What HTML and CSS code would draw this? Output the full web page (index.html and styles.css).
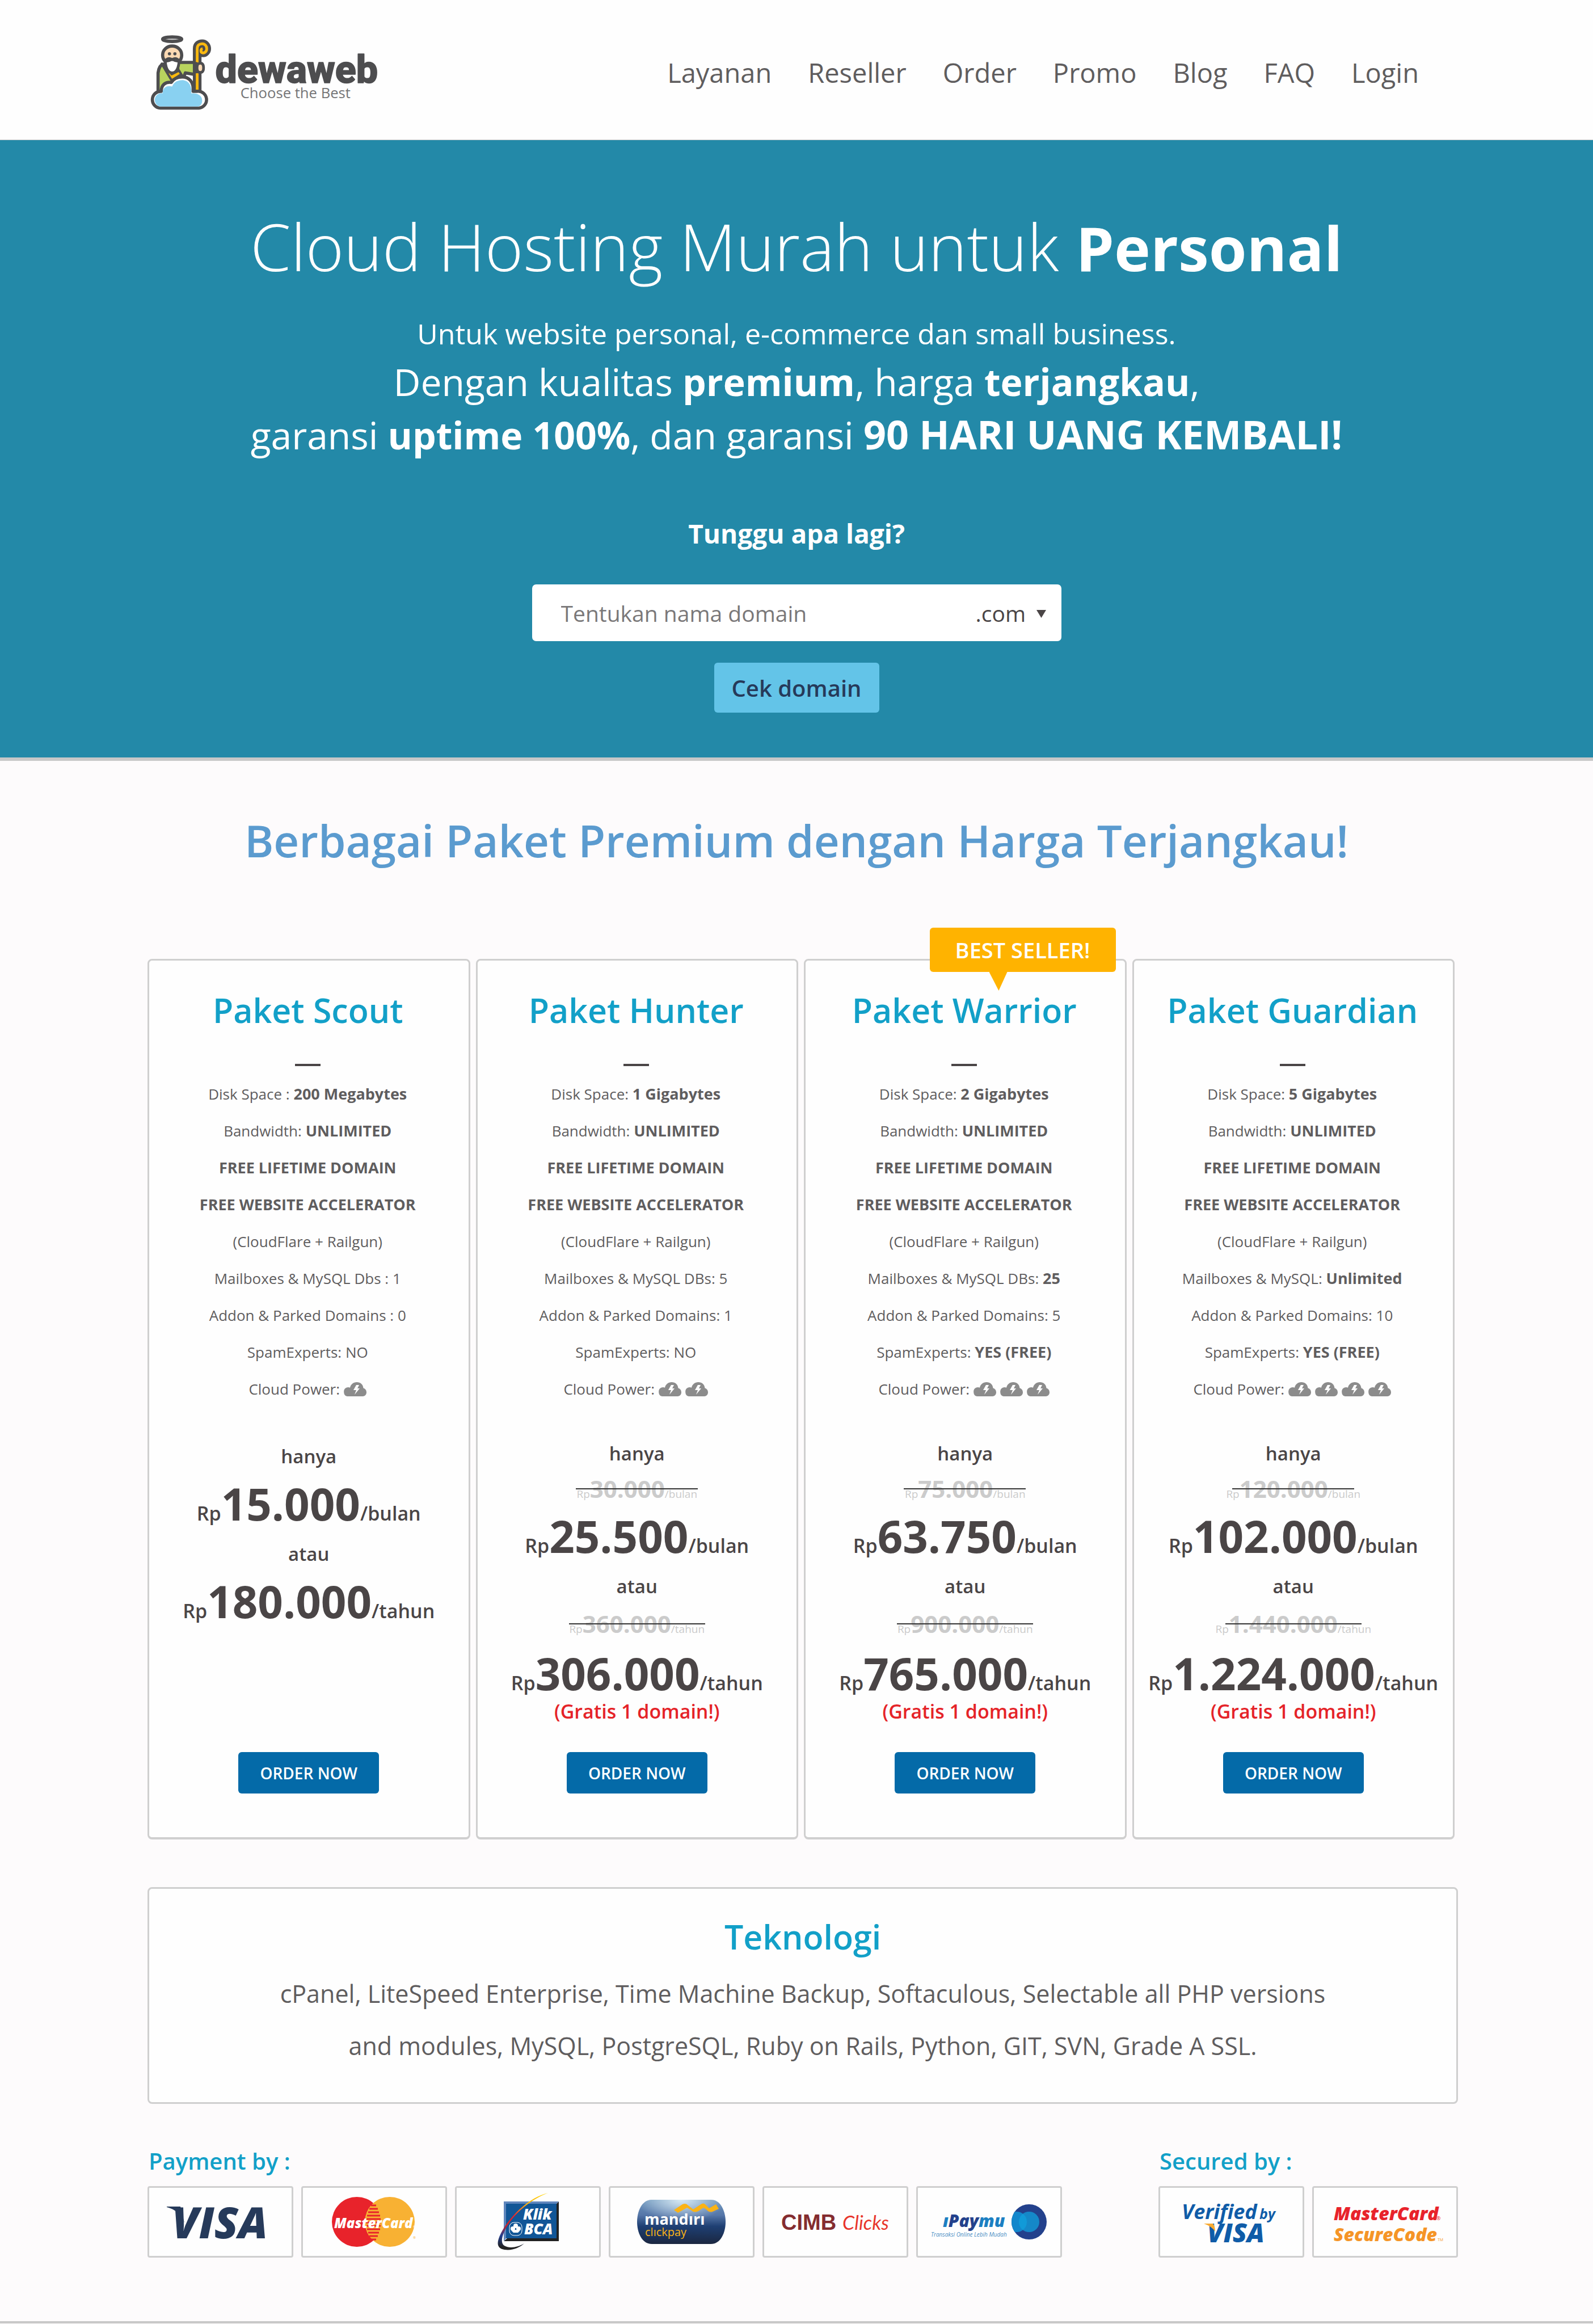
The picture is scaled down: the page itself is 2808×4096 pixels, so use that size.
FILE: index.html
```html
<!DOCTYPE html>
<html lang="id">
<head>
<meta charset="utf-8">
<meta name="viewport" content="width=device-width, initial-scale=1">
<title>Dewaweb - Cloud Hosting Murah</title>
<link rel="stylesheet" href="styles.css">
</head>
<body>
<svg class="sprite" aria-hidden="true">
  <symbol id="cloud" viewBox="0 0 41 25">
    <path fill="#8c8c8c" d="M7 25a7 8 0 0 1-1-15.500c2-.8 4-.7 6 .2C13 4 18 0 24 0s11 4 11.500 10.500C39 11.500 41 14.500 41 18c0 4-3 7-6.500 7z"/>
    <path fill="#fff" d="M23 5h5l-3 6h4l-9 11 3-8h-5z"/>
  </symbol>
</svg>

<header class="header">
  <a class="logo" href="#" aria-label="Dewaweb">
    <svg width="400" height="134" viewBox="331 77 499 167">
      <g transform="translate(300 40)" stroke="#4d4d4f" stroke-width="7" stroke-linejoin="round" stroke-linecap="round">
        <ellipse cx="79" cy="47" rx="21" ry="5" fill="#c9c9c9"/>
        <path fill="#b8d45e" d="M57 102C50 108 47 117 48 130V168L96 150 93 98z" />
        <path fill="#b8d45e" d="M90 98H131V125L108 121 104 132 92 118z"/>
        <path fill="#fff" stroke="none" d="M112 127l14 4v18z"/>
        <path fill="#fbb90f" d="M56 101L78 138 99 124 94 116 78 124 66 106z" stroke-width="5"/>
        <ellipse cx="79" cy="82" rx="21" ry="20" fill="#fbd9b3"/>
        <path fill="#fff" stroke-width="6" d="M64 94C64 108 69 121 79 121S94 108 94 94C88 88 84 88 79 92 74 88 70 88 64 94z"/>
        <path fill="none" stroke-width="5" d="M62 95q10 2 17-4q7 6 17 4"/>
        <g fill="#4d4d4f" stroke="none"><circle cx="73" cy="79" r="3.500"/><circle cx="85" cy="79" r="3.500"/></g>
        <path fill="none" stroke-width="19" d="M134 160V68C134 60 139 57 145 57C151 57 155 62 155 68C155 73 151 77 147 77"/>
        <path fill="none" stroke="#fbb90f" stroke-width="6" stroke-linecap="butt" d="M134 158V68C134 60 139 57 145 57C151 57 155 62 155 68C155 74 150 78 146 77C141 76 141 69 146 68"/>
        <path fill="none" stroke-width="8" d="M132 101V118"/>
        <path fill="#fbd9b3" stroke-width="6" d="M135 102C144 97 148 101 148 110S144 122 136 119C133 114 133 108 135 102z"/>
        <path fill="#fff" d="M53 198.500a18.500 18.500 0 0 1 2-37C55 148 64 140 77 142C82 134 90 130 101 130C116 130 127 141 125 161.500h9a18.500 18.500 0 0 1 4 37z"/>
        <path fill="#89d1f1" stroke="none" d="M53 195a14.500 14.500 0 0 1 5-29C58 154 66 148 79 151C83 141 91 137 101 137C114 137 123 148 121 166C136 165 145 171 145 182C145 190 141 195 134 195z"/>
      </g>
      <text class="logo-name" x="474" y="183" font-size="85">dewaweb</text>
      <text class="logo-tag" x="529" y="217" font-size="32">Choose the Best</text>
    </svg>
  </a>
  <nav class="nav">
    <a href="#">Layanan</a>
    <a href="#">Reseller</a>
    <a href="#">Order</a>
    <a href="#">Promo</a>
    <a href="#">Blog</a>
    <a href="#">FAQ</a>
    <a href="#">Login</a>
  </nav>
</header>

<main>
<section class="hero">
  <h1>Cloud Hosting Murah untuk <strong>Personal</strong></h1>
  <p class="lead">Untuk website personal, e-commerce dan small business.</p>
  <p class="pitch">Dengan kualitas <strong>premium</strong>, harga <strong>terjangkau</strong>,<br>garansi <strong>uptime 100%</strong>, dan garansi <strong class="guarantee">90 HARI UANG KEMBALI!</strong></p>
  <p class="ask">Tunggu apa lagi?</p>
  <form class="search">
    <div class="field">
      <input type="text" placeholder="Tentukan nama domain" aria-label="Nama domain">
      <select aria-label="Ekstensi domain"><option>.com</option></select>
      <svg class="caret" width="17" height="14" viewBox="0 0 17 14" aria-hidden="true"><path fill="#4a4546" d="M0 0h17l-8.500 14z"/></svg>
    </div>
    <button type="button">Cek domain</button>
  </form>
</section>

<h2 class="heading">Berbagai Paket Premium dengan Harga Terjangkau!</h2>

<div class="content">
  <div class="plans">
    <article class="plan plan-basic">
      <h3>Paket Scout</h3>
      <ul>
        <li>Disk Space : <b>200 Megabytes</b></li>
        <li>Bandwidth: <b>UNLIMITED</b></li>
        <li><b>FREE LIFETIME DOMAIN</b></li>
        <li><b>FREE WEBSITE ACCELERATOR</b></li>
        <li>(CloudFlare + Railgun)</li>
        <li>Mailboxes &amp; MySQL Dbs : 1</li>
        <li>Addon &amp; Parked Domains : 0</li>
        <li>SpamExperts: NO</li>
        <li class="power">Cloud Power: <svg><use href="#cloud"/></svg></li>
      </ul>
      <div class="prices">
        <p class="word">hanya</p>
        <p class="price month"><span>Rp</span>15.000<span>/bulan</span></p>
        <p class="word">atau</p>
        <p class="price year"><span>Rp</span>180.000<span>/tahun</span></p>
      </div>
      <button type="button">ORDER NOW</button>
    </article>

    <article class="plan">
      <h3>Paket Hunter</h3>
      <ul>
        <li>Disk Space: <b>1 Gigabytes</b></li>
        <li>Bandwidth: <b>UNLIMITED</b></li>
        <li><b>FREE LIFETIME DOMAIN</b></li>
        <li><b>FREE WEBSITE ACCELERATOR</b></li>
        <li>(CloudFlare + Railgun)</li>
        <li>Mailboxes &amp; MySQL DBs: 5</li>
        <li>Addon &amp; Parked Domains: 1</li>
        <li>SpamExperts: NO</li>
        <li class="power">Cloud Power: <svg><use href="#cloud"/></svg><svg><use href="#cloud"/></svg></li>
      </ul>
      <div class="prices">
        <p class="word">hanya</p>
        <del class="month"><span>Rp</span>30.000<span>/bulan</span></del>
        <p class="price month"><span>Rp</span>25.500<span>/bulan</span></p>
        <p class="word">atau</p>
        <del class="year"><span>Rp</span>360.000<span>/tahun</span></del>
        <p class="price year"><span>Rp</span>306.000<span>/tahun</span></p>
        <p class="bonus">(Gratis 1 domain!)</p>
      </div>
      <button type="button">ORDER NOW</button>
    </article>

    <article class="plan">
      <div class="badge">BEST SELLER!</div>
      <h3>Paket Warrior</h3>
      <ul>
        <li>Disk Space: <b>2 Gigabytes</b></li>
        <li>Bandwidth: <b>UNLIMITED</b></li>
        <li><b>FREE LIFETIME DOMAIN</b></li>
        <li><b>FREE WEBSITE ACCELERATOR</b></li>
        <li>(CloudFlare + Railgun)</li>
        <li>Mailboxes &amp; MySQL DBs: <b>25</b></li>
        <li>Addon &amp; Parked Domains: 5</li>
        <li>SpamExperts: <b>YES (FREE)</b></li>
        <li class="power">Cloud Power: <svg><use href="#cloud"/></svg><svg><use href="#cloud"/></svg><svg><use href="#cloud"/></svg></li>
      </ul>
      <div class="prices">
        <p class="word">hanya</p>
        <del class="month"><span>Rp</span>75.000<span>/bulan</span></del>
        <p class="price month"><span>Rp</span>63.750<span>/bulan</span></p>
        <p class="word">atau</p>
        <del class="year"><span>Rp</span>900.000<span>/tahun</span></del>
        <p class="price year"><span>Rp</span>765.000<span>/tahun</span></p>
        <p class="bonus">(Gratis 1 domain!)</p>
      </div>
      <button type="button">ORDER NOW</button>
    </article>

    <article class="plan">
      <h3>Paket Guardian</h3>
      <ul>
        <li>Disk Space: <b>5 Gigabytes</b></li>
        <li>Bandwidth: <b>UNLIMITED</b></li>
        <li><b>FREE LIFETIME DOMAIN</b></li>
        <li><b>FREE WEBSITE ACCELERATOR</b></li>
        <li>(CloudFlare + Railgun)</li>
        <li>Mailboxes &amp; MySQL: <b>Unlimited</b></li>
        <li>Addon &amp; Parked Domains: 10</li>
        <li>SpamExperts: <b>YES (FREE)</b></li>
        <li class="power">Cloud Power: <svg><use href="#cloud"/></svg><svg><use href="#cloud"/></svg><svg><use href="#cloud"/></svg><svg><use href="#cloud"/></svg></li>
      </ul>
      <div class="prices">
        <p class="word">hanya</p>
        <del class="month"><span>Rp</span>120.000<span>/bulan</span></del>
        <p class="price month"><span>Rp</span>102.000<span>/bulan</span></p>
        <p class="word">atau</p>
        <del class="year"><span>Rp</span>1.440.000<span>/tahun</span></del>
        <p class="price year"><span>Rp</span>1.224.000<span>/tahun</span></p>
        <p class="bonus">(Gratis 1 domain!)</p>
      </div>
      <button type="button">ORDER NOW</button>
    </article>
  </div>

  <section class="tech">
    <h2>Teknologi</h2>
    <p>cPanel, LiteSpeed Enterprise, Time Machine Backup, Softaculous, Selectable all PHP versions<br>and modules, MySQL, PostgreSQL, Ruby on Rails, Python, GIT, SVN, Grade A SSL.</p>
  </section>

  <footer class="partners">
    <section>
      <h4>Payment by :</h4>
      <div class="cards">
        <div class="card"><svg viewBox="0 0 251 120" role="img" aria-label="VISA">
          <path fill="#263a5a" d="M31 33H55L62 62C56 46 46 38 31 34z"/>
          <text class="heavy" x="40" y="89" font-size="77" fill="#263a5a">VISA</text>
        </svg></div>
        <div class="card"><svg viewBox="0 0 251 120" role="img" aria-label="MasterCard">
          <circle cx="95" cy="60" r="44" fill="#e8232b"/>
          <circle cx="153" cy="60" r="44" fill="#f8b133"/>
          <g stroke="#e8232b" stroke-width="3"><path d="M120 31h9M117 37h15M115 43h19M113 49h23M112 55h25M111 61h26M112 67h25M113 73h23M115 79h19M117 85h15M120 91h9"/></g>
          <text class="heavy" x="55" y="71" font-size="24" fill="#fff">MasterCard</text>
          <text class="plain" x="194" y="71" font-size="6" fill="#fff">®</text>
          <text class="plain" x="194" y="90" font-size="6" fill="#f8b133">®</text>
        </svg></div>
        <div class="card"><svg viewBox="0 0 251 120" role="img" aria-label="Klik BCA">
          <defs><linearGradient id="swoosh" x1="0" y1="0" x2="0" y2="1">
            <stop offset="0" stop-color="#ffd500"/><stop offset=".2" stop-color="#fbb315"/><stop offset=".4" stop-color="#e8232b"/><stop offset=".55" stop-color="#c8252c"/><stop offset=".75" stop-color="#233f8f"/><stop offset=".95" stop-color="#222"/>
          </linearGradient></defs>
          <path fill="#222" d="M180 24V94H83L89 89H176V28z"/>
          <path fill="#5f86bd" d="M83 24H180L176 28H87V89L83 94z"/>
          <path fill="#115697" d="M87 28H176V89H87z"/>
          <path fill="url(#swoosh)" d="M161 9C128 17 99 46 83 71C70 93 68 106 84 109C98 111 110 106 119 98C109 104 94 108 84 102C74 95 84 74 94 60C108 40 134 19 161 9z"/>
          <g fill="none" stroke="#fff"><rect x="93" y="61" width="22" height="23" rx="8" stroke-width="1"/></g>
          <g fill="#fff"><circle cx="104" cy="67" r="4"/><circle cx="99" cy="72" r="4"/><circle cx="109" cy="72" r="4"/><path d="M97 76q7-4 14 0l-3 3h-8z"/></g>
          <text class="heavy" x="117" y="56" font-size="26" fill="#fff">Klik</text>
          <text class="heavy" x="119" y="82" font-size="26" fill="#fff">BCA</text>
        </svg></div>
        <div class="card"><svg viewBox="0 0 251 120" role="img" aria-label="mandiri clickpay">
          <defs>
            <linearGradient id="pill" x1="0" y1="0" x2="0" y2="1"><stop offset="0" stop-color="#6e97bd"/><stop offset=".35" stop-color="#5576a8"/><stop offset=".6" stop-color="#1e3f73"/><stop offset="1" stop-color="#1b2740"/></linearGradient>
            <radialGradient id="glow" cx=".5" cy="0" r=".5"><stop offset="0" stop-color="#e4f3fb" stop-opacity=".9"/><stop offset="1" stop-color="#e4f3fb" stop-opacity="0"/></radialGradient>
          </defs>
          <path id="pill-shape" fill="url(#pill)" d="M73 21H177C195 21 203 42 203 60S195 99 177 99H73C55 99 47 78 47 60S55 21 73 21z"/>
          <path fill="url(#glow)" d="M73 21H177C195 21 203 42 203 60S195 99 177 99H73C55 99 47 78 47 60S55 21 73 21z"/>
          <path fill="#fbb315" d="M112 39L127 29Q133 26 137 31L146 38 158 30Q164 25 168 30L174 36 186 29 191 37 180 42Q174 44 169 38L164 35 155 41Q147 45 142 39L135 35 119 44z"/>
          <text class="bold" x="60" y="65" font-size="27" fill="#fff">mandırı</text>
          <text class="plain" x="61" y="85" font-size="20" fill="#fbb315">clıckpay</text>
        </svg></div>
        <div class="card"><svg viewBox="0 0 251 120" role="img" aria-label="CIMB Clicks">
          <text class="arial" x="30" y="74" font-size="38" fill="#842c2f">CIMB</text>
          <text class="script" x="138" y="74" font-size="34" fill="#e8352b">Clicks</text>
        </svg></div>
        <div class="card"><svg viewBox="0 0 251 120" role="img" aria-label="iPaymu">
          <text class="heavy" x="44" y="69" font-size="30" fill="#23418c"><tspan fill="#1b7fc2">ı</tspan>Pay<tspan fill="#1b7fc2">mu</tspan></text>
          <text class="tiny" x="23" y="86" font-size="10" fill="#4b8fc4">Transaksi Online Lebih Mudah</text>
          <circle cx="196" cy="60" r="31" fill="#23418c"/>
          <clipPath id="disc"><circle cx="196" cy="60" r="31"/></clipPath>
          <g clip-path="url(#disc)"><circle cx="174" cy="60" r="18" fill="#1287cc"/><circle cx="196" cy="60" r="18" fill="#12a0dc" fill-opacity=".75"/></g>
        </svg></div>
      </div>
    </section>
    <section>
      <h4>Secured by :</h4>
      <div class="cards">
        <div class="card"><svg viewBox="0 0 251 120" role="img" aria-label="Verified by VISA">
          <text class="italic" x="38" y="55" font-size="36" fill="#0f5ca8">Verified</text>
          <text class="italic" x="175" y="55" font-size="25" fill="#0f5ca8">by</text>
          <text class="heavy" x="83" y="96" font-size="46" fill="#0f5ca8">VISA</text>
          <path fill="#f8a930" d="M77 63H93Q97 68 97 77Q91 68 77 63z"/>
        </svg></div>
        <div class="card"><svg viewBox="0 0 251 120" role="img" aria-label="MasterCard SecureCode">
          <text class="heavy" x="35" y="57" font-size="32" fill="#e8232b">MasterCard</text>
          <text class="plain" x="216" y="57" font-size="9" fill="#e8232b">®</text>
          <text class="heavy" x="35" y="94" font-size="32" fill="#f59527">SecureCode</text>
          <text class="plain" x="218" y="94" font-size="7" fill="#f59527">TM</text>
        </svg></div>
      </div>
    </section>
  </footer>
</div>
</main>
</body>
</html>
```
FILE: styles.css
```css
* {
  box-sizing: border-box;
  margin: 0;
  padding: 0;
}

body {
  background: #fdfbfc;
  color: #5f5d5e;
  font-family: "Open Sans", "Noto Sans", sans-serif;
  border-bottom: 4px solid #c8c8c8;
}

button,
input,
select {
  border: 0;
  font-family: inherit;
}

.sprite {
  display: none;
}

/* Header */
.header {
  display: flex;
  align-items: center;
  justify-content: space-between;
  height: 247px;
  padding: 10px 307px 0 265px;
  background: #fefefe;
  border-bottom: 1px solid #c8c8c8;
}

.logo svg {
  display: block;
}

.logo-name {
  font-family: Roboto, sans-serif;
  font-weight: 800;
  fill: #4d4d4f;
  stroke: #4d4d4f;
  stroke-width: 2;
  stroke-linejoin: round;
}

.logo-tag {
  fill: #757577;
}

.nav {
  display: flex;
  gap: 64px;
}

.nav a {
  color: inherit;
  font-size: 47px;
  line-height: 60px;
  text-decoration: none;
}

/* Hero */
.hero {
  padding: 117px 0 79px;
  background: #2389a8;
  border-bottom: 6px solid #c8c8c8;
  color: #fff;
  text-align: center;
}

.hero h1 {
  font-size: 115px;
  font-weight: 350;
  line-height: 140px;
}

.hero h1 strong {
  font-size: 108px;
  font-weight: 700;
  line-height: 120px;
}

.lead {
  margin-top: 48px;
  font-size: 50px;
  line-height: 73px;
}

.pitch {
  font-size: 66px;
  line-height: 94px;
}

.guarantee {
  font-size: 70px;
  line-height: 80px;
}

.ask {
  margin-top: 97px;
  font-size: 46px;
  font-weight: 700;
  line-height: 60px;
}

.search {
  display: flex;
  flex-direction: column;
  align-items: center;
  gap: 38px;
  margin-top: 60px;
}

.field {
  display: flex;
  align-items: center;
  width: 933px;
  height: 100px;
  padding: 0 27px 0 51px;
  background: #fff;
  border-radius: 7px;
}

.field input {
  flex: 1;
  min-width: 0;
  height: 100%;
  background: none;
  color: #4a4546;
  font-size: 39px;
}

.field input::placeholder {
  color: #7a7879;
  opacity: 1;
}

.field select {
  width: 107px;
  appearance: none;
  background: none;
  color: #4a4546;
  font-size: 39px;
}

.caret {
  margin-top: 4px;
}

.search button {
  width: 291px;
  height: 88px;
  background: #63c4e8;
  border-radius: 6px;
  color: #263a5a;
  font-size: 40px;
  font-weight: 600;
}

/* Content */
.heading {
  margin-top: 90px;
  color: #5b9bcf;
  font-size: 78px;
  font-weight: 600;
  line-height: 100px;
  text-align: center;
}

.content {
  padding: 159px 238px 112px 260px;
}

.plans {
  display: grid;
  grid-template-columns: repeat(4, 1fr);
  gap: 10px;
  padding-right: 6px;
}

.plan {
  position: relative;
  display: flex;
  flex-direction: column;
  align-items: center;
  min-height: 1552px;
  padding: 47px 0 77px;
  background: #fefefe;
  border: 3px solid #cfcfcf;
  border-bottom-width: 4px;
  border-radius: 8px;
  text-align: center;
  white-space: nowrap;
}

.plan h3 {
  padding-right: 3px;
  color: #12a0c8;
  font-size: 59px;
  font-weight: 600;
  line-height: 80px;
}

.plan h3::after {
  content: "";
  display: block;
  width: 45px;
  height: 4px;
  margin: 55px auto 0;
  background: #4a4546;
}

.plan ul {
  margin-top: 17px;
  padding-right: 4px;
  list-style: none;
}

.plan li {
  font-size: 26px;
  line-height: 65px;
}

.plan b {
  font-size: 27px;
  line-height: 40px;
}

.power {
  display: flex;
  align-items: center;
  justify-content: center;
  gap: 6px;
}

.power svg {
  width: 41px;
  height: 25px;
}

.badge {
  position: absolute;
  top: -58px;
  right: 16px;
  width: 328px;
  height: 78px;
  background: #ffb300;
  border-radius: 6px;
  color: #fff;
  font-size: 38px;
  font-weight: 600;
  line-height: 78px;
}

.badge::after {
  content: "";
  position: absolute;
  top: 78px;
  left: 105px;
  width: 32px;
  height: 33px;
  background: #ffb300;
  clip-path: polygon(0 0, 100% 0, 53% 100%);
}

.prices {
  margin-top: 56px;
  color: #4a4546;
}

.plan-basic .prices {
  margin-top: 61px;
}

.word {
  font-size: 33px;
  font-weight: 600;
  line-height: 50px;
}

.price {
  font-size: 78px;
  font-weight: 700;
  line-height: 84px;
}

.price span {
  font-size: 34px;
  font-weight: 600;
  line-height: 40px;
}

.prices del {
  position: relative;
  display: block;
  margin: 12px 0 16px;
  color: #cbcbcb;
  font-size: 42px;
  font-weight: 700;
  line-height: 50px;
  text-decoration: none;
}

.prices del span {
  font-size: 19px;
  font-weight: 400;
  line-height: 20px;
}

.prices del::after {
  content: "";
  position: absolute;
  top: 24px;
  left: 50%;
  width: 215px;
  height: 2px;
  margin-left: -108px;
  background: #333;
}

.prices .month + .word {
  margin-top: 22px;
}

.prices del.year {
  margin: 16px 0 20px;
}

.prices del.year::after {
  width: 240px;
  margin-left: -120px;
}

.plan-basic .price {
  margin-top: 16px;
}

.bonus {
  margin-top: 3px;
  color: #e52328;
  font-size: 34px;
  font-weight: 600;
  line-height: 44px;
}

.plan button {
  width: 248px;
  height: 73px;
  margin-top: auto;
  background: #046aa8;
  border-radius: 6px;
  color: #fff;
  font-size: 28px;
  font-weight: 600;
}

/* Technology */
.tech {
  margin-top: 84px;
  padding: 44px 0 53px;
  background: #fefefe;
  border: 3px solid #cfcfcf;
  border-radius: 8px;
  text-align: center;
}

.tech h2 {
  color: #12a0c8;
  font-size: 59px;
  font-weight: 600;
  line-height: 80px;
}

.tech p {
  margin-top: 15px;
  font-size: 43px;
  line-height: 92px;
}

/* Partners */
.partners {
  display: flex;
  justify-content: space-between;
  margin-top: 71px;
}

.partners h4 {
  padding-left: 2px;
  color: #12a0c8;
  font-size: 40px;
  font-weight: 600;
  line-height: 60px;
}

.cards {
  display: flex;
  gap: 14px;
  margin-top: 14px;
}

.card {
  width: 257px;
  height: 126px;
  background: #fefefe;
  border: 3px solid #cfcfcf;
  border-radius: 4px;
}

.card svg {
  display: block;
}

.heavy {
  font-style: italic;
  font-weight: 800;
}

.italic {
  font-style: italic;
  font-weight: 700;
}

.bold {
  font-weight: 700;
}

.plain {
  font-weight: 400;
}

.tiny {
  font-style: italic;
}

.arial {
  font-family: "Liberation Sans", sans-serif;
  font-weight: 700;
}

.script {
  font-family: Lato, sans-serif;
  font-style: italic;
}
```
